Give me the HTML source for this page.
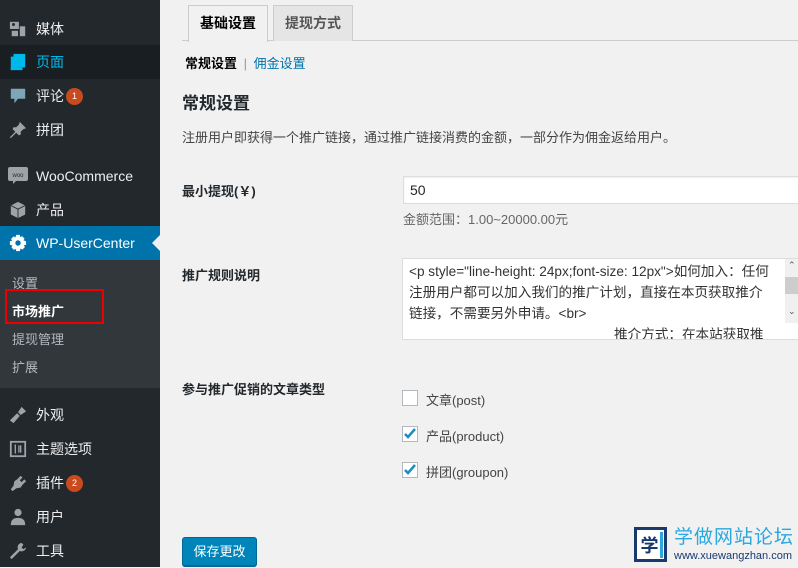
<!DOCTYPE html>
<html><head><meta charset="utf-8"><style>
*{margin:0;padding:0;box-sizing:border-box}
body{width:798px;height:567px;overflow:hidden;background:#f1f1f1;font-family:"Liberation Sans","Noto Sans CJK SC",sans-serif;font-size:13px;color:#23282d;position:relative}
#sb{position:absolute;left:0;top:0;width:160px;height:567px;background:#23282d}
.mi{position:absolute;left:0;width:160px;height:34px;color:#eee;font-size:14px;line-height:34px;padding-left:36px}
.ic{position:absolute;left:9px;top:8px;width:18px;height:18px;fill:#9ea3a8}
.badge{display:inline-block;width:17px;height:17px;border-radius:50%;background:#ca4a1f;color:#fff;font-size:9px;line-height:17px;text-align:center;vertical-align:2px;margin-left:2px}
.sub{position:absolute;left:12px;color:#b4b9be;font-size:13px}
.a{position:absolute}
.tab{position:absolute;top:5px;height:36px;border:1px solid #ccc;border-bottom:none;font-size:14px;font-weight:bold;line-height:34px;text-align:center}
label.l{position:absolute;left:182px;font-weight:bold;font-size:13px}
.cb{position:absolute;left:402px;width:16px;height:16px;border:1px solid #b4b9be;background:#fff}
.cbl{position:absolute;left:426px;font-size:13px;color:#444}
</style></head><body>
<div id="sb">
<div class="mi" style="top:12px"><svg class="ic" viewBox="0 0 20 20"><rect x="1" y="2" width="10" height="8"/><circle cx="5" cy="5" r="1.6" fill="#23282d"/><rect x="12" y="7" width="6" height="11"/><rect x="3" y="12" width="7" height="6"/></svg>媒体</div>
<div class="mi" style="top:45px;background:#191e23;color:#00b9eb"><svg class="ic" viewBox="0 0 20 20" style="fill:#00b9eb"><rect x="5" y="1" width="13" height="15"/><rect x="2" y="4" width="3" height="15"/><rect x="2" y="16" width="13" height="3"/></svg>页面</div>
<div class="mi" style="top:79px"><svg class="ic" viewBox="0 0 20 20" style="fill:#7ea6b9"><path d="M2 2h16v11h-8l-4 5v-5H2z"/></svg>评论<span class="badge">1</span></div>
<div class="mi" style="top:113px"><svg class="ic" viewBox="0 0 20 20"><path d="M12 1l7 7-3 1-3 3 0 3-2 1-3-3-6 6-1-1 6-6-3-3 1-2h3l3-3z"/></svg>拼团</div>
<div class="mi" style="top:159px"><svg class="ic" viewBox="0 0 20 20" style="width:20px;height:20px;left:8px;top:6px"><rect x="0" y="2" width="20" height="14" rx="2"/><path d="M5 16l0 3 3-3z"/><text x="10" y="12" font-size="6" text-anchor="middle" fill="#23282d" font-family="Liberation Sans">woo</text></svg>WooCommerce</div>
<div class="mi" style="top:193px"><svg class="ic" viewBox="0 0 20 20"><path d="M10 1l8 4v10l-8 4-8-4V5z"/><path d="M2 5l8 4 8-4" stroke="#23282d" fill="none"/><path d="M10 9v10" stroke="#23282d"/></svg>产品</div>
<div class="mi" style="top:226px;background:#0073aa;color:#fff"><svg class="ic" viewBox="0 0 20 20" style="fill:#fff"><path d="M8 1h4l.5 2.5 2-1.2 2.8 2.8-1.2 2L19 8v4l-2.5.5 1.2 2-2.8 2.8-2-1.2L12 19H8l-.5-2.5-2 1.2-2.8-2.8 1.2-2L1 12V8l2.5-.5-1.2-2 2.8-2.8 2 1.2z"/><circle cx="10" cy="10" r="3" fill="#0073aa"/></svg>WP-UserCenter<span style="position:absolute;right:0;top:9px;border:8px solid transparent;border-right-color:#f1f1f1"></span></div>
<div class="a" style="top:260px;left:0;width:160px;height:128px;background:#32373c"></div>
<div class="sub" style="top:273px">设置</div>
<div class="sub" style="top:301px;color:#fff;font-weight:bold">市场推广</div>
<div class="a" style="left:5px;top:289px;width:99px;height:35px;border:2px solid #e00"></div>
<div class="sub" style="top:329px">提现管理</div>
<div class="sub" style="top:357px">扩展</div>
<div class="mi" style="top:398px"><svg class="ic" viewBox="0 0 20 20"><path d="M14 1l5 5-6 4-3-3z"/><path d="M9 8l3 3-7 8-4-3z"/></svg>外观</div>
<div class="mi" style="top:432px"><svg class="ic" viewBox="0 0 20 20"><rect x="2" y="2" width="16" height="16" fill="none" stroke="#9ea3a8" stroke-width="2"/><path d="M7 5v10M11 6v8M13 6v8" stroke="#9ea3a8" stroke-width="1.5"/></svg>主题选项</div>
<div class="mi" style="top:466px"><svg class="ic" viewBox="0 0 20 20"><path d="M13 2l2 2-3 3 2 2 3-3 2 2-4 4-2 3-5 1-4 3-2-2 3-4 1-5 3-2z"/></svg>插件<span class="badge">2</span></div>
<div class="mi" style="top:500px"><svg class="ic" viewBox="0 0 20 20"><circle cx="10" cy="5" r="4"/><path d="M2 19c0-6 3-8 8-8s8 2 8 8z"/></svg>用户</div>
<div class="mi" style="top:534px"><svg class="ic" viewBox="0 0 20 20"><path d="M14 1a5 5 0 0 0-4 7L1 17l2 2 9-9a5 5 0 0 0 7-4l-3 2-2-2 2-3z"/></svg>工具</div>
</div>

<div class="a" style="left:182px;top:40px;width:616px;height:1px;background:#ccc"></div>
<div class="tab" style="left:188px;width:80px;background:#f1f1f1;height:37px;color:#000">基础设置</div>
<div class="tab" style="left:273px;width:80px;background:#e5e5e5;color:#555">提现方式</div>
<div class="a" style="left:185px;top:53px;font-size:13px"><b style="color:#000">常规设置</b> <span style="color:#999;margin:0 3px">|</span> <span style="color:#0073aa">佣金设置</span></div>
<div class="a" style="left:182px;top:89px;font-size:17px;font-weight:bold">常规设置</div>
<div class="a" style="left:182px;top:127px;font-size:13px;color:#444">注册用户即获得一个推广链接，通过推广链接消费的金额，一部分作为佣金返给用户。</div>

<label class="l" style="top:181px">最小提现(￥)</label>
<div class="a" style="left:403px;top:176px;width:400px;height:28px;background:#fff;border:1px solid #ddd;box-shadow:inset 0 1px 2px rgba(0,0,0,.07);padding:5px 6px;font-size:14px">50</div>
<div class="a" style="left:403px;top:209px;color:#666">金额范围：1.00~20000.00元</div>

<label class="l" style="top:265px">推广规则说明</label>
<div class="a" style="left:402px;top:258px;width:400px;height:82px;background:#fff;border:1px solid #ddd;overflow:hidden">
<div style="padding:2px 20px 0 6px;font-size:13.6px;line-height:21px;color:#333;width:386px">&lt;p style="line-height: 24px;font-size: 12px"&gt;如何加入：任何注册用户都可以加入我们的推广计划，直接在本页获取推介链接，不需要另外申请。&lt;br&gt;<br><span style="padding-left:205px">推介方式：在本站获取推</span></div>
<div class="a" style="left:382px;top:0;width:14px;height:64px;background:#f0f0f0"><div style="position:absolute;top:18px;width:14px;height:17px;background:#cdcdcd"></div><div style="position:absolute;top:1px;left:3px;font-size:9px;color:#555">⌃</div><div style="position:absolute;top:47px;left:3px;font-size:9px;color:#555">⌄</div></div>
</div>

<label class="l" style="top:379px">参与推广促销的文章类型</label>
<div class="cb" style="top:390px"></div><div class="cbl" style="top:390px">文章(post)</div>
<div class="cb" style="top:426px"><svg width="14" height="14" viewBox="0 0 14 14" style="position:absolute;left:0;top:0"><path d="M2 7l3 3 7-8" stroke="#1e8cbe" stroke-width="2.5" fill="none"/></svg></div><div class="cbl" style="top:426px">产品(product)</div>
<div class="cb" style="top:462px"><svg width="14" height="14" viewBox="0 0 14 14" style="position:absolute;left:0;top:0"><path d="M2 7l3 3 7-8" stroke="#1e8cbe" stroke-width="2.5" fill="none"/></svg></div><div class="cbl" style="top:462px">拼团(groupon)</div>

<div class="a" style="left:182px;top:537px;width:75px;height:29px;background:#0085ba;border:1px solid #006799;border-radius:3px;box-shadow:0 1px 0 #006799;color:#fff;font-size:13px;line-height:27px;text-align:center">保存更改</div>

<div class="a" style="left:634px;top:527px;width:33px;height:35px;border:3px solid #1a3a6e;background:#fff"><div style="position:absolute;left:2px;top:2px;width:24px;height:26px;background:#fff;border-right:3px solid #29a8e0;color:#1a3a6e;font-weight:bold;font-size:18px;line-height:26px;text-align:center;font-family:'Noto Sans CJK SC',sans-serif">学</div></div>
<div class="a" style="left:674px;top:524px;color:#29a8e0;font-size:19px;letter-spacing:1px;font-family:'Noto Sans CJK SC',sans-serif;line-height:24px">学做网站论坛</div>
<div class="a" style="left:674px;top:550px;color:#1a3a6e;font-size:11px;line-height:12px">www.xuewangzhan.com</div>
</body></html>
